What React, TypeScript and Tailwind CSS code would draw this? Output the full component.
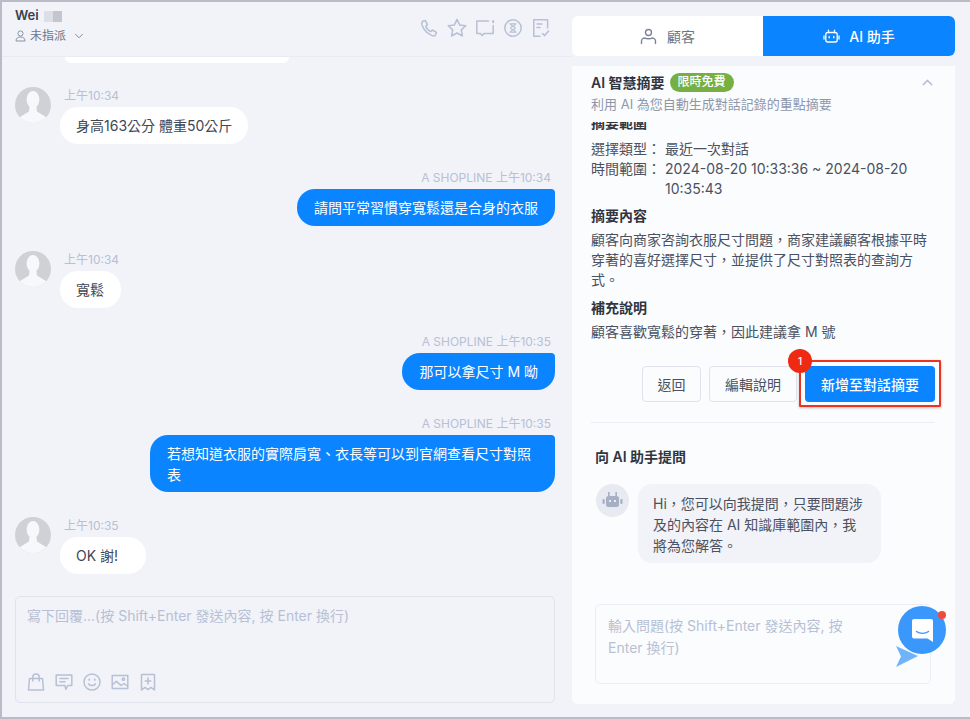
import { ChevronDown, ChevronUp } from "lucide-react";
import type { ReactNode } from "react";

const fontStack = "font-['Inter','Noto_Sans_CJK_TC',sans-serif]";

const Ico = ({ children, size = 20, className = "text-[#b7c0d4]" }: { children: ReactNode; size?: number; className?: string }) => (
  <svg width={size} height={size} viewBox="0 0 20 20" fill="none" stroke="currentColor" strokeWidth="1.5" strokeLinecap="round" strokeLinejoin="round" className={className}>
    {children}
  </svg>
);

const headerIcons = [
  <path key="a" d="M4 3.2 6.4 2.6 8.4 6.6 6.8 8.2C7.6 10.6 9.4 12.6 11.8 13.6L13.4 12 17.4 14.4 16.6 16.8C16 18 14.6 18.2 13.2 17.6 8.6 15.8 4.8 12 3 7 2.6 5.4 2.8 4 4 3.2Z" />,
  <path key="b" d="M10 1.4 12.6 6.9 18.8 7.7 14.3 11.9 15.4 18 10 15 4.6 18 5.7 11.9 1.2 7.7 7.4 6.9Z" />,
  <g key="c">
    <path d="M13.5 3H1.8V15.6H5.5L7.2 17.6 9 15.6H18.2V7.5" />
    <path d="M18.2 3V4.2" strokeWidth="2" />
  </g>,
  <g key="d">
    <circle cx="10" cy="10" r="8.2" />
    <path d="M7 5.8H13M7 14.2H13M7.6 6C7.6 8.2 12.4 8.6 12.4 10 12.4 11.4 7.6 11.8 7.6 14M12.4 6C12.4 8.2 7.6 8.6 7.6 10 7.6 11.4 12.4 11.8 12.4 14" strokeWidth="1.2" />
  </g>,
  <g key="e">
    <path d="M9 18.2H2.8V1.8H16.6V10" />
    <path d="M6 6H11M6 9.5H9" />
    <path d="M11.5 15.5 13.6 17.6 17.6 13" />
  </g>,
];

const composerIcons = [
  <g key="a">
    <path d="M3.5 6.5H16.5L17.5 18H2.5Z" />
    <path d="M6.8 9V5C6.8 1 13.2 1 13.2 5V9" />
  </g>,
  <g key="b">
    <path d="M2.2 3H17.8V13.5H13.8L11.8 17.4 11 13.5H2.2Z" />
    <path d="M6 6.5H14M6 9.8H11" />
  </g>,
  <g key="c">
    <circle cx="10" cy="10" r="8" />
    <path d="M6.6 11.8C7.8 14.2 12.2 14.2 13.4 11.8" />
    <path d="M7.2 7.4V7.9M12.8 7.4V7.9" strokeWidth="1.8" />
  </g>,
  <g key="d">
    <path d="M2.2 3.5H17.8V16.5H2.2Z" />
    <path d="M2.6 12.5 6.5 9.4 11 13.5 14 11.5 17.4 14" />
    <circle cx="13.4" cy="7.2" r="1.1" />
  </g>,
  <g key="e">
    <path d="M3.5 2.5H16.5V18L13 15.4 10 17.6 7 15.4 3.5 18Z" />
    <path d="M10 6V12M7.2 9H12.8" />
  </g>,
];

const Avatar = () => (
  <svg width="36" height="36" viewBox="0 0 36 36" className="mt-[2px] shrink-0">
    <defs>
      <clipPath id="avatar-clip">
        <circle cx="18" cy="18" r="18" />
      </clipPath>
    </defs>
    <circle cx="18" cy="18" r="18" fill="#cfd1d6" />
    <g clipPath="url(#avatar-clip)" fill="#f7f8fb">
      <ellipse cx="18" cy="12.5" rx="6.4" ry="8.5" />
      <path d="M14.6 19H21.4L22 24.5 31 30V36H5V30L14 24.5Z" />
    </g>
  </svg>
);

const CustomerMsg = ({ time, text, width }: { time: string; text: string; width: string }) => (
  <div className="flex gap-[9px] pl-[13px]">
    <Avatar />
    <div className="flex flex-col items-start">
      <div className="h-5 pl-[4px] text-[12px] leading-[22px] text-[#b7c0d4]">{time}</div>
      <div className={`mt-0.5 flex h-[37px] items-center rounded-[18px] bg-white pl-[16px] text-[14px] text-[#3f4654] ${width}`}>{text}</div>
    </div>
  </div>
);

const AgentMsg = ({ time, children, className }: { time: string; children: ReactNode; className: string }) => (
  <div className="flex flex-col items-end">
    <div className="h-5 pr-[4px] text-[12px] leading-[22px] text-[#b7c0d4]">A SHOPLINE {time}</div>
    <div className={`mt-0.5 rounded-[18px] rounded-tr-[4px] bg-[#0a84ff] px-[17px] text-[14px] text-white ${className}`}>{children}</div>
  </div>
);

const ChatColumn = () => (
  <div className="flex h-full w-[570px] shrink-0 flex-col">
    <div className="flex h-[55px] shrink-0 items-start justify-between border-b border-[#e9ebf2] pl-[13px] pr-[21px]">
      <div>
        <div className="mt-[7px] flex h-[14px] items-center gap-[5px] text-[13px] font-semibold text-[#3a404c]">
          Wei
          <span className="flex h-[11px] w-[18px]">
            <span className="w-[9px] bg-[#dcdfe6]" />
            <span className="w-[9px] bg-[#c3c6cf]" />
          </span>
        </div>
        <div className="mt-[4px] flex items-center gap-[4px] text-[12px] text-[#6e7686]">
          <svg width="11" height="12" viewBox="0 0 11 12" fill="none" stroke="#8a93a6" strokeWidth="1">
            <circle cx="5.5" cy="3.5" r="2.6" />
            <path d="M1 11C1 8 3 7 5.5 7S10 8 10 11Z" />
          </svg>
          未指派
          <ChevronDown className="ml-[2px] h-[14px] w-[14px] text-[#7b8496]" strokeWidth={1.6} />
        </div>
      </div>
      <div className="mt-[16px] flex gap-[8px]">
        {headerIcons.map((icon, i) => (
          <Ico key={i}>{icon}</Ico>
        ))}
      </div>
    </div>

    <div className="flex-1 overflow-hidden pr-[17px]">
      <div className="ml-[63px] h-[6px] w-[224px] rounded-b-[16px] bg-white" />
      <div className="mt-[22px] flex flex-col gap-[23px]">
        <CustomerMsg time="上午10:34" text="身高163公分 體重50公斤" width="w-[188px]" />
        <AgentMsg time="上午10:34" className="flex h-[37px] items-center">請問平常習慣穿寬鬆還是合身的衣服</AgentMsg>
        <CustomerMsg time="上午10:34" text="寬鬆" width="w-[61px]" />
        <AgentMsg time="上午10:35" className="flex h-[37px] items-center">那可以拿尺寸 M 呦</AgentMsg>
        <AgentMsg time="上午10:35" className="w-[405px] py-[7.5px] leading-[21px]">
          若想知道衣服的實際肩寬、衣長等可以到官網查看尺寸對照<br />表
        </AgentMsg>
        <CustomerMsg time="上午10:35" text="OK 謝!" width="w-[86px]" />
      </div>
    </div>

    <div className="mb-[14px] ml-[13px] mr-[17px] flex h-[107px] shrink-0 flex-col justify-between rounded-[5px] border border-[#dfe3ec] px-[11px] pb-[10px] pt-[8px]">
      <div className="text-[14px] text-[#b7c0d4]">寫下回覆...(按 Shift+Enter 發送內容, 按 Enter 換行)</div>
      <div className="-ml-[1px] flex gap-[8px]">
        {composerIcons.map((icon, i) => (
          <Ico key={i}>{icon}</Ico>
        ))}
      </div>
    </div>
  </div>
);

const Tabs = () => (
  <div className="flex h-10 shrink-0 overflow-hidden rounded-[6px] bg-white">
    <div className="flex w-[191px] items-center justify-center gap-[10px] text-[14px] text-[#6e7686]">
      <svg width="17" height="17" viewBox="0 0 17 17" fill="none" stroke="#7b8496" strokeWidth="1.4" strokeLinecap="round">
        <circle cx="8.5" cy="4.5" r="3" />
        <path d="M1.5 15.5V13C1.5 11 3.5 10 5 10 6 11 11 11 12 10 13.5 10 15.5 11 15.5 13V15.5" />
      </svg>
      顧客
    </div>
    <div className="flex flex-1 items-center justify-center gap-[9px] bg-[#0a84ff] text-[14px] font-medium text-white">
      <svg width="17" height="17" viewBox="0 0 17 17" fill="none" stroke="#fff" strokeWidth="1.3" strokeLinecap="round">
        <rect x="2.8" y="4.5" width="11.4" height="9.5" rx="2" />
        <path d="M5.5 4.5V2.2M11.5 4.5V2.2M1 8V11M16 8V11M6.2 8.5V9.8M10.8 8.5V9.8" />
      </svg>
      AI 助手
    </div>
  </div>
);

const Label = ({ children }: { children: ReactNode }) => (
  <div className="text-[14px] font-semibold leading-5 text-[#2f3541]">{children}</div>
);

const AiPanel = () => (
  <div className="mt-[10px] flex flex-1 flex-col rounded-b-[6px] bg-[#fbfcfe] pl-[19px] pr-[20px]">
    <div className="flex h-[28px] items-center justify-between pt-[4px]">
      <div className="flex items-center gap-[5px]">
        <span className="text-[14px] font-semibold text-[#2f3541]">AI 智慧摘要</span>
        <span className="flex h-[19px] w-[64px] items-center justify-center rounded-full bg-[#76b043] text-[12px] font-medium text-white">限時免費</span>
      </div>
      <ChevronUp className="mr-[-1px] h-[17px] w-[17px] text-[#b7c0d4]" strokeWidth={2} />
    </div>
    <div className="text-[13px] leading-5 text-[#8e97a9]">利用 AI 為您自動生成對話記錄的重點摘要</div>

    {/* scrolled list: this heading is half under the fold in the picture */}
    <div className="mt-[8px] h-[8px] overflow-hidden">
      <div className="-mt-[9px]">
        <Label>摘要範圍</Label>
      </div>
    </div>
    <div className="mt-[9px] text-[14px] leading-[20px] text-[#4a5160]">
      <div className="flex">
        <span className="w-[74px] shrink-0">選擇類型：</span>
        <span>最近一次對話</span>
      </div>
      <div className="flex">
        <span className="w-[74px] shrink-0">時間範圍：</span>
        <span>2024-08-20 10:33:36 ~ 2024-08-20<br />10:35:43</span>
      </div>
    </div>
    <div className="mt-[7px]"><Label>摘要內容</Label></div>
    <div className="mt-[4px] text-[14px] leading-[20px] text-[#4a5160]">
      顧客向商家咨詢衣服尺寸問題，商家建議顧客根據平時<br />
      穿著的喜好選擇尺寸，並提供了尺寸對照表的查詢方<br />
      式。
    </div>
    <div className="mt-[8px]"><Label>補充說明</Label></div>
    <div className="mt-[4px] text-[14px] leading-5 text-[#4a5160]">顧客喜歡寬鬆的穿著，因此建議拿 M 號</div>

    <div className="mt-[24px] flex justify-end gap-[8px]">
      <button className="h-9 w-[59px] rounded-[4px] border border-[#dfe3ec] text-[14px] text-[#4a5160]">返回</button>
      <button className="h-9 w-[88px] rounded-[4px] border border-[#dfe3ec] text-[14px] text-[#4a5160]">編輯說明</button>
      <div className="relative">
        <button className="h-9 w-[130px] rounded-[4px] bg-[#0a84ff] text-[14px] font-medium text-white">新增至對話摘要</button>
        <div className="absolute -bottom-[5px] -left-[6px] -right-[6px] -top-[6px] rounded-[1px] border-2 border-[#ea3323] shadow-[0_1px_3px_rgba(0,0,0,0.25)]" />
        <div className="absolute -left-[17px] -top-[17px] flex h-6 w-6 items-center justify-center rounded-full bg-[#ee2b12] text-[10px] font-medium text-white">1</div>
      </div>
    </div>

    <div className="mt-[20px] border-t border-[#eceef4]" />

    <div className="mt-[24px] pl-[4px] text-[14px] font-semibold leading-5 text-[#2f3541]">向 AI 助手提問</div>

    <div className="mt-[17px] flex gap-[9px] pl-[5px]">
      <div className="flex h-[33px] w-[33px] shrink-0 items-center justify-center rounded-full bg-[#e8eaf1]">
        <svg width="21" height="19" viewBox="0 0 21 19" fill="#a6afc3">
          <rect x="4" y="5" width="13" height="11" rx="2.5" />
          <rect x="0.5" y="8" width="2.2" height="5" rx="1" />
          <rect x="18.3" y="8" width="2.2" height="5" rx="1" />
          <rect x="6" y="1" width="1.6" height="4" />
          <rect x="13.4" y="1" width="1.6" height="4" />
          <rect x="7" y="9" width="2" height="2" fill="#e8eaf1" />
          <rect x="12" y="9" width="2" height="2" fill="#e8eaf1" />
        </svg>
      </div>
      <div className="h-[79px] w-[243px] rounded-[14px] bg-[#f1f3f8] px-[15px] py-[9px] text-[14px] leading-[21px] text-[#4a5160]">
        Hi，您可以向我提問，只要問題涉<br />
        及的內容在 AI 知識庫範圍內，我<br />
        將為您解答。
      </div>
    </div>

    <div className="ml-[4px] mr-[4px] mt-[41px] h-[80px] rounded-[5px] border border-[#eceef4] px-[12px] py-[10px] text-[14px] leading-[22px] text-[#b7c0d4]">
      輸入問題(按 Shift+Enter 發送內容, 按<br />
      Enter 換行)
    </div>
  </div>
);

const Messenger = () => (
  <>
    <svg width="22" height="21" viewBox="0 0 22 21" fill="#6fb3fb" className="absolute left-[894px] top-[644px]">
      <path d="M0 0 22 10 0 21 5 10.5Z" />
    </svg>
    <div className="absolute left-[896px] top-[604px] flex h-12 w-12 items-center justify-center rounded-full bg-[#3a97fb]">
      <svg width="21" height="23" viewBox="0 0 21 23" fill="#fff">
        <path d="M2 0H19A2 2 0 0 1 21 2V23L15.5 19.5H2A2 2 0 0 1 0 17.5V2A2 2 0 0 1 2 0Z" />
        <path d="M4.5 12.5C8 15 13 15 16.5 12.5" fill="none" stroke="#3a97fb" strokeWidth="1.4" strokeLinecap="round" />
      </svg>
    </div>
    <div className="absolute left-[936px] top-[609px] h-2 w-2 rounded-full bg-[#f2493b]" />
  </>
);

export default function App() {
  return (
    <div className={`relative flex h-[719px] w-[970px] overflow-hidden border-y-2 border-l-2 border-[#b9bcc6] bg-[#f1f3f9] ${fontStack}`}>
      <ChatColumn />
      <div className="mb-[13px] mt-[14px] flex w-[383px] shrink-0 flex-col">
        <Tabs />
        <AiPanel />
      </div>
      <Messenger />
    </div>
  );
}
